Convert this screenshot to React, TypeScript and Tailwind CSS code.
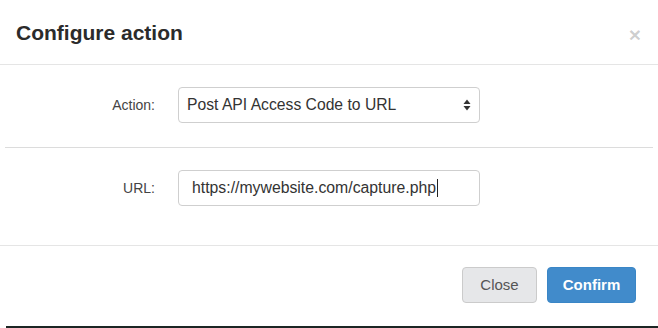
export default function App() {
  return (
    <div className="w-[658px] h-[328px] flex flex-col bg-white text-[#333] font-['Liberation_Sans',Arial,sans-serif]">
      {/* Header */}
      <div className="h-[65px] shrink-0 pl-4 pr-[17px] flex items-center justify-between border-b border-[#e5e5e5]">
        <h4 className="text-[21px] font-bold leading-none text-[#2b2b2b]">Configure action</h4>
        <button className="text-[21px] font-bold leading-none text-black/20 mt-[4px]">×</button>
      </div>

      {/* Action row */}
      <div className="flex items-center pt-[22px] pb-[24px] border-b border-[#dcdcdc] mx-[5px]">
        <label className="w-[150px] text-right text-[14px] text-[#444]">Action:</label>
        <div className="ml-[23px] w-[302px] h-[36px] rounded-[4px] border border-[#cfcfcf] flex items-center justify-between pl-[8px] pr-[8px]">
          <span className="text-[15.7px] text-[#333]">Post API Access Code to URL</span>
          <svg width="8" height="12" viewBox="0 0 8 12" className="text-[#333]">
            <path d="M4 0.5 L7.5 5 L0.5 5 Z" fill="currentColor" />
            <path d="M4 11.5 L7.5 7 L0.5 7 Z" fill="currentColor" />
          </svg>
        </div>
      </div>

      {/* URL row */}
      <div className="flex items-start pt-[22px] h-[98px] border-b border-[#e5e5e5]">
        <div className="flex items-center h-[36px]">
          <label className="w-[155px] text-right text-[14px] text-[#444]">URL:</label>
          <div className="ml-[23px] w-[302px] h-[36px] rounded-[4px] border border-[#cfcfcf] flex items-center pl-[13px]">
            <span className="text-[15.8px] text-[#333]">https://mywebsite.com/capture.php</span>
            <span className="w-px h-[18px] bg-[#222] ml-px" />
          </div>
        </div>
      </div>

      {/* Footer */}
      <div className="flex-1 flex items-start justify-end gap-[10px] pt-[21px] pr-[22px]">
        <button className="h-[36px] w-[75px] rounded-[4px] border border-[#cbcbcb] bg-[#e6e7e9] text-[15px] text-[#555]">
          Close
        </button>
        <button className="h-[36px] w-[89px] rounded-[4px] border border-[#3a86c6] bg-[#418bcb] text-[15px] font-bold text-white">
          Confirm
        </button>
      </div>
      <div className="h-[2px] shrink-0 bg-[#1c2624] ml-[6px]" />
    </div>
  )
}
